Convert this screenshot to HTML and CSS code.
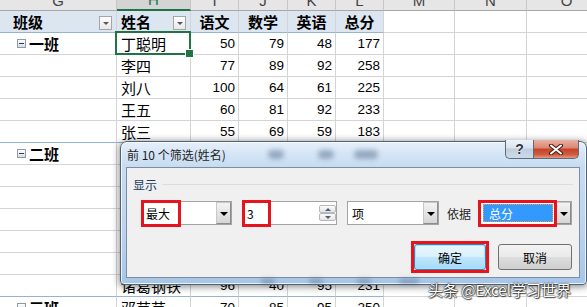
FILE: index.html
```html
<!DOCTYPE html>
<html>
<head>
<meta charset="utf-8">
<link rel="stylesheet" href="styles.css">
</head>
<body>
<div class="sheet">
  <div class="row colhdr">
    <div class="ch">G</div><div class="ch sel">H</div><div class="ch">I</div><div class="ch">J</div><div class="ch">K</div><div class="ch">L</div><div class="ch">M</div><div class="ch">N</div><div class="ch">O</div>
  </div>
  <div class="row hdr">
    <div class="c b gh">班级<span class="fb"></span></div>
    <div class="c b">姓名<span class="fb"></span></div>
    <div class="c b ctr">语文</div>
    <div class="c b ctr">数学</div>
    <div class="c b ctr">英语</div>
    <div class="c b ctr">总分</div>
    <div class="c"></div><div class="c"></div><div class="c"></div>
  </div>
  <div class="row">
    <div class="c g"><span class="tog"></span>一班</div>
    <div class="c active">丁聪明</div>
    <div class="c n">50</div><div class="c n">79</div><div class="c n">48</div><div class="c n">177</div>
    <div class="c"></div><div class="c"></div><div class="c"></div>
  </div>
  <div class="row">
    <div class="c"></div><div class="c">李四</div>
    <div class="c n">77</div><div class="c n">89</div><div class="c n">92</div><div class="c n">258</div>
    <div class="c"></div><div class="c"></div><div class="c"></div>
  </div>
  <div class="row">
    <div class="c"></div><div class="c">刘八</div>
    <div class="c n">100</div><div class="c n">64</div><div class="c n">61</div><div class="c n">225</div>
    <div class="c"></div><div class="c"></div><div class="c"></div>
  </div>
  <div class="row">
    <div class="c"></div><div class="c">王五</div>
    <div class="c n">60</div><div class="c n">81</div><div class="c n">92</div><div class="c n">233</div>
    <div class="c"></div><div class="c"></div><div class="c"></div>
  </div>
  <div class="row gb">
    <div class="c"></div><div class="c">张三</div>
    <div class="c n">55</div><div class="c n">69</div><div class="c n">59</div><div class="c n">183</div>
    <div class="c"></div><div class="c"></div><div class="c"></div>
  </div>
  <div class="row">
    <div class="c g"><span class="tog"></span>二班</div>
    <div class="c">赵六</div>
    <div class="c n">85</div><div class="c n">92</div><div class="c n">88</div><div class="c n">265</div>
    <div class="c"></div><div class="c"></div><div class="c"></div>
  </div>
  <div class="row">
    <div class="c"></div><div class="c">钱七</div>
    <div class="c n">72</div><div class="c n">68</div><div class="c n">80</div><div class="c n">220</div>
    <div class="c"></div><div class="c"></div><div class="c"></div>
  </div>
  <div class="row">
    <div class="c"></div><div class="c">孙九</div>
    <div class="c n">90</div><div class="c n">87</div><div class="c n">93</div><div class="c n">270</div>
    <div class="c"></div><div class="c"></div><div class="c"></div>
  </div>
  <div class="row">
    <div class="c"></div><div class="c">周十</div>
    <div class="c n">66</div><div class="c n">75</div><div class="c n">70</div><div class="c n">211</div>
    <div class="c"></div><div class="c"></div><div class="c"></div>
  </div>
  <div class="row">
    <div class="c"></div><div class="c">吴一</div>
    <div class="c n">81</div><div class="c n">79</div><div class="c n">85</div><div class="c n">245</div>
    <div class="c"></div><div class="c"></div><div class="c"></div>
  </div>
  <div class="row">
    <div class="c"></div><div class="c">郑二</div>
    <div class="c n">58</div><div class="c n">90</div><div class="c n">77</div><div class="c n">225</div>
    <div class="c"></div><div class="c"></div><div class="c"></div>
  </div>
  <div class="row gb">
    <div class="c"></div><div class="c">诸葛钢铁</div>
    <div class="c n">96</div><div class="c n">40</div><div class="c n">95</div><div class="c n">231</div>
    <div class="c"></div><div class="c"></div><div class="c"></div>
  </div>
  <div class="row">
    <div class="c g"><span class="tog"></span>三班</div>
    <div class="c">邓芸芸</div>
    <div class="c n">70</div><div class="c n">85</div><div class="c n">95</div><div class="c n">250</div>
    <div class="c"></div><div class="c"></div><div class="c"></div>
  </div>
</div>

<div class="dlg">
  <div class="tbar">
    <span class="ttl">前 10 个筛选(姓名)</span>
    <span class="blob b1"></span><span class="blob b2"></span><span class="blob b3"></span>
    <div class="caps">
      <div class="cap help">?</div>
      <div class="cap close">
        <svg width="14" height="11" viewBox="0 0 14 11"><path d="M2 1.5 L12 9.5 M12 1.5 L2 9.5" stroke="#4a1c12" stroke-width="4" stroke-linecap="round" fill="none"/><path d="M2 1.5 L12 9.5 M12 1.5 L2 9.5" stroke="#ffffff" stroke-width="2" stroke-linecap="round" fill="none"/></svg>
      </div>
    </div>
  </div>
  <div class="client">
    <div class="grp"><span class="glabel">显示</span><span class="gline"></span></div>
    <div class="ctrls">
      <div class="combo w1"><span class="val">最大</span><span class="dd"></span><span class="mark m1"></span></div>
      <div class="spin"><span class="val">3</span><span class="sb"><span class="up"></span><span class="dn"></span></span><span class="mark m2"></span></div>
      <div class="combo w3"><span class="val">项</span><span class="dd"></span></div>
      <span class="lbl">依据</span>
      <div class="combo w4"><span class="val hl">总分</span><span class="dd"></span><span class="mark m3"></span></div>
    </div>
    <div class="btns">
      <div class="btn def">确定<span class="mark m4"></span></div>
      <div class="btn cancel">取消</div>
    </div>
  </div>
  <div class="bframe">
    <span class="blob c1"></span><span class="blob c2"></span><span class="blob c3"></span><span class="blob c4"></span>
  </div>
</div>

<div class="wm">头条 @Excel学习世界</div>
</body>
</html>
```
FILE: styles.css
```css
* { box-sizing: border-box; }
html, body { margin: 0; padding: 0; }
body {
  width: 587px;
  height: 307px;
  overflow: hidden;
  position: relative;
  background: #fff;
  color: #000;
  font-family: "Noto Sans CJK SC", sans-serif;
}

/* ---------- sheet ---------- */
.sheet { margin-top: -10px; }
.row {
  display: grid;
  grid-template-columns: 117px 74px 48px 49px 48px 48px 71px 72px 80px;
  height: 22px;
}
.colhdr { height: 21px; background: #e6e6e6; }
.ch {
  border-right: 1px solid #c6c6c6;
  border-bottom: 1px solid #a8a8a8;
  display: flex;
  align-items: center;
  justify-content: center;
  font: 15px "Liberation Sans", sans-serif;
  color: #444;
}
.ch.sel { background: #d4d4d4; color: #217346; border-bottom: 2px solid #217346; }

.c {
  border-right: 1px solid #d4d4d4;
  border-bottom: 1px solid #d4d4d4;
  display: flex;
  align-items: center;
  padding: 0 4px;
  font-size: 15px;
  white-space: nowrap;
  overflow: hidden;
}
.hdr .c.b { background: #dce6f1; border-bottom-color: #95b3d7; font-weight: bold; }
.c.gh { padding-left: 13px; }
.c.ctr { justify-content: center; }
.c.n {
  justify-content: flex-end;
  padding-right: 3px;
  font: 13.5px "Liberation Sans", sans-serif;
}
.gb .c:nth-child(-n+6) { border-bottom-color: #95b3d7; }

.fb {
  width: 13px;
  height: 14px;
  margin-left: auto;
  margin-top: 2px;
  border: 1px solid #a6a6a6;
  background: linear-gradient(#fdfdfd, #e8e8e8);
  position: relative;
  flex: none;
}
.fb::after {
  content: "";
  position: absolute;
  left: 3px;
  top: 5px;
  border-left: 3px solid transparent;
  border-right: 3px solid transparent;
  border-top: 3px solid #555;
}

.c.g { font-weight: bold; padding-left: 17px; }
.tog {
  width: 9px;
  height: 9px;
  border: 1px solid #8f9aa8;
  background: linear-gradient(#ffffff, #d8dde4);
  margin-right: 3px;
  position: relative;
  flex: none;
}
.tog::after {
  content: "";
  position: absolute;
  left: 1px;
  right: 1px;
  top: 3px;
  height: 1px;
  background: #2e3a48;
}

.c.active { position: relative; overflow: visible; z-index: 2; }
.c.active::after {
  content: "";
  position: absolute;
  left: -2px;
  top: -2px;
  right: -1px;
  bottom: -1px;
  border: 2px solid #217346;
}
.c.active::before {
  content: "";
  position: absolute;
  right: -4px;
  bottom: -4px;
  width: 7px;
  height: 7px;
  background: #217346;
  border: 1px solid #fff;
  z-index: 3;
}

/* ---------- dialog ---------- */
.dlg {
  position: absolute;
  left: 120px;
  top: 141px;
  width: 467px;
  height: 144px;
  border: 1px solid #4f6378;
  border-radius: 7px 7px 4px 4px;
  background: linear-gradient(180deg, #e6effa 0, #d5e5f6 12px, #c8dcf1 24px, #bdd4ee 60%, #a6c6e8 100%);
  box-shadow: 0 1px 7px 1px rgba(0, 0, 0, .45), inset 0 0 0 1px rgba(255, 255, 255, .75);
  display: flex;
  flex-direction: column;
  font-family: "Noto Sans CJK SC", sans-serif;
  font-size: 12px;
  z-index: 5;
}
.tbar {
  height: 25px;
  display: flex;
  align-items: center;
  padding-left: 6px;
}
.ttl { color: #1e1e1e; font-size: 12px; white-space: nowrap; }
.blob {
  display: block;
  height: 9px;
  border-radius: 5px;
  background: rgba(70, 95, 125, .45);
  filter: blur(2.5px);
  flex: none;
}
.b1 { width: 16px; margin-left: 42px; }
.b2 { width: 16px; margin-left: 34px; }
.b3 { width: 24px; margin-left: 20px; }
.caps {
  margin-left: auto;
  align-self: flex-start;
  margin-top: -2px;
  margin-right: 7px;
  display: flex;
}
.cap {
  height: 19px;
  display: flex;
  align-items: center;
  justify-content: center;
  border: 1px solid #5d6b7c;
  border-top: none;
}
.help {
  width: 28px;
  border-right: none;
  border-radius: 0 0 0 5px;
  background: linear-gradient(#eef3f9, #d8e2ee 45%, #bfcddc 50%, #cddbe9);
  font: bold 14px "Liberation Sans", sans-serif;
  color: #2c3440;
  text-shadow: 0 0 2px #fff, 0 0 1px #fff;
}
.close {
  width: 46px;
  border-radius: 0 0 5px 0;
  background: linear-gradient(#eab0a2, #da8570 45%, #c4422a 50%, #cf5a3e 80%, #e49a80);
}
.close svg { display: block; }

.client {
  height: 111px;
  margin: 0 6px 0 5px;
  background: #f0f0f0;
  border: 1px solid #7a8ea6;
  display: flex;
  flex-direction: column;
  flex: none;
}
.bframe {
  flex: 1;
  display: flex;
  align-items: center;
  padding-left: 140px;
}
.c1 { width: 14px; height: 5px; }
.c2 { width: 14px; height: 5px; margin-left: 34px; }
.c3 { width: 14px; height: 5px; margin-left: 34px; }
.c4 { width: 20px; height: 5px; margin-left: 28px; }

.grp {
  display: flex;
  align-items: center;
  margin-top: 9px;
  padding: 0 6px;
  height: 16px;
}
.glabel { color: #1e395b; font-size: 12px; line-height: 16px; }
.gline { flex: 1; height: 1px; background: #d5dfe5; margin-left: 5px; margin-top: -1px; }

.ctrls {
  display: flex;
  align-items: center;
  margin-top: 8px;
  padding-left: 14px;
  height: 24px;
}
.combo, .spin {
  height: 24px;
  border: 1px solid #a3a3a3;
  background: #fff;
  display: flex;
  align-items: stretch;
  position: relative;
}
.w1 { width: 91px; margin-right: 10px; }
.spin { width: 95px; margin-right: 10px; }
.w3 { width: 92px; margin-right: 8px; }
.lbl { width: 25px; margin-right: 6px; color: #1e1e1e; white-space: nowrap; }
.w4 { width: 94px; }
.val {
  flex: 1;
  display: flex;
  align-items: center;
  padding-left: 4px;
  color: #000;
  white-space: nowrap;
}
.dd {
  width: 15px;
  background: linear-gradient(#f3f3f3, #d6d6d6);
  border: 1px solid #8c8c8c;
  border-top-color: #c8c8c8;
  border-left-color: #c8c8c8;
  position: relative;
  flex: none;
}
.dd::after {
  content: "";
  position: absolute;
  left: 3px;
  top: 9px;
  border-left: 4px solid transparent;
  border-right: 4px solid transparent;
  border-top: 4px solid #000;
}
.hl {
  background: #3399ff;
  color: #fff;
  margin: 2px 3px 2px 4px;
  padding-left: 6px;
  outline: 1px dotted #e8a040;
  outline-offset: -1px;
}
.sb {
  width: 17px;
  display: flex;
  flex-direction: column;
  margin: 3px 0;
  flex: none;
}
.up, .dn {
  flex: 1;
  border: 1px solid #b8b8b8;
  border-radius: 2px;
  background: linear-gradient(#fbfbfb, #e4e4e4);
  position: relative;
}
.up::after, .dn::after {
  content: "";
  position: absolute;
  left: 5px;
  top: 2px;
  border-left: 3px solid transparent;
  border-right: 3px solid transparent;
}
.up::after { border-bottom: 3px solid #4c607a; }
.dn::after { border-top: 3px solid #4c607a; }

.mark {
  position: absolute;
  border: 3px solid #e8141d;
  pointer-events: none;
  z-index: 4;
}
.m1 { left: -1px; top: -2px; width: 40px; height: 27px; }
.m2 { left: -1px; top: -2px; width: 29px; height: 27px; }
.m3 { left: -1px; top: -2px; width: 79px; height: 27px; }
.m4 { left: -4px; top: -4px; width: 78px; height: 32px; }

.btns {
  display: flex;
  justify-content: flex-end;
  gap: 12px;
  margin-top: 19px;
  padding-right: 7px;
}
.btn {
  height: 26px;
  border: 1px solid #707070;
  border-radius: 3px;
  background: linear-gradient(#f2f2f2 0%, #ebebeb 48%, #dddddd 52%, #cfcfcf 100%);
  display: flex;
  align-items: center;
  justify-content: center;
  font-size: 12px;
  color: #000;
  position: relative;
}
.def {
  width: 72px;
  border-color: #3c7fb1;
  background: linear-gradient(#eaf6fd 0%, #d9f0fc 48%, #bee6fd 52%, #a7d9f5 100%);
  box-shadow: inset 0 0 0 1px #a8e4fb;
}
.cancel { width: 74px; }

/* ---------- watermark ---------- */
.wm {
  position: absolute;
  left: 428px;
  top: 279px;
  font-size: 15px;
  color: #fff;
  white-space: nowrap;
  text-shadow: 0 0 2px #000, 0 0 1px #000, 1px 1px 1px rgba(0,0,0,.6);
  z-index: 6;
}
```
